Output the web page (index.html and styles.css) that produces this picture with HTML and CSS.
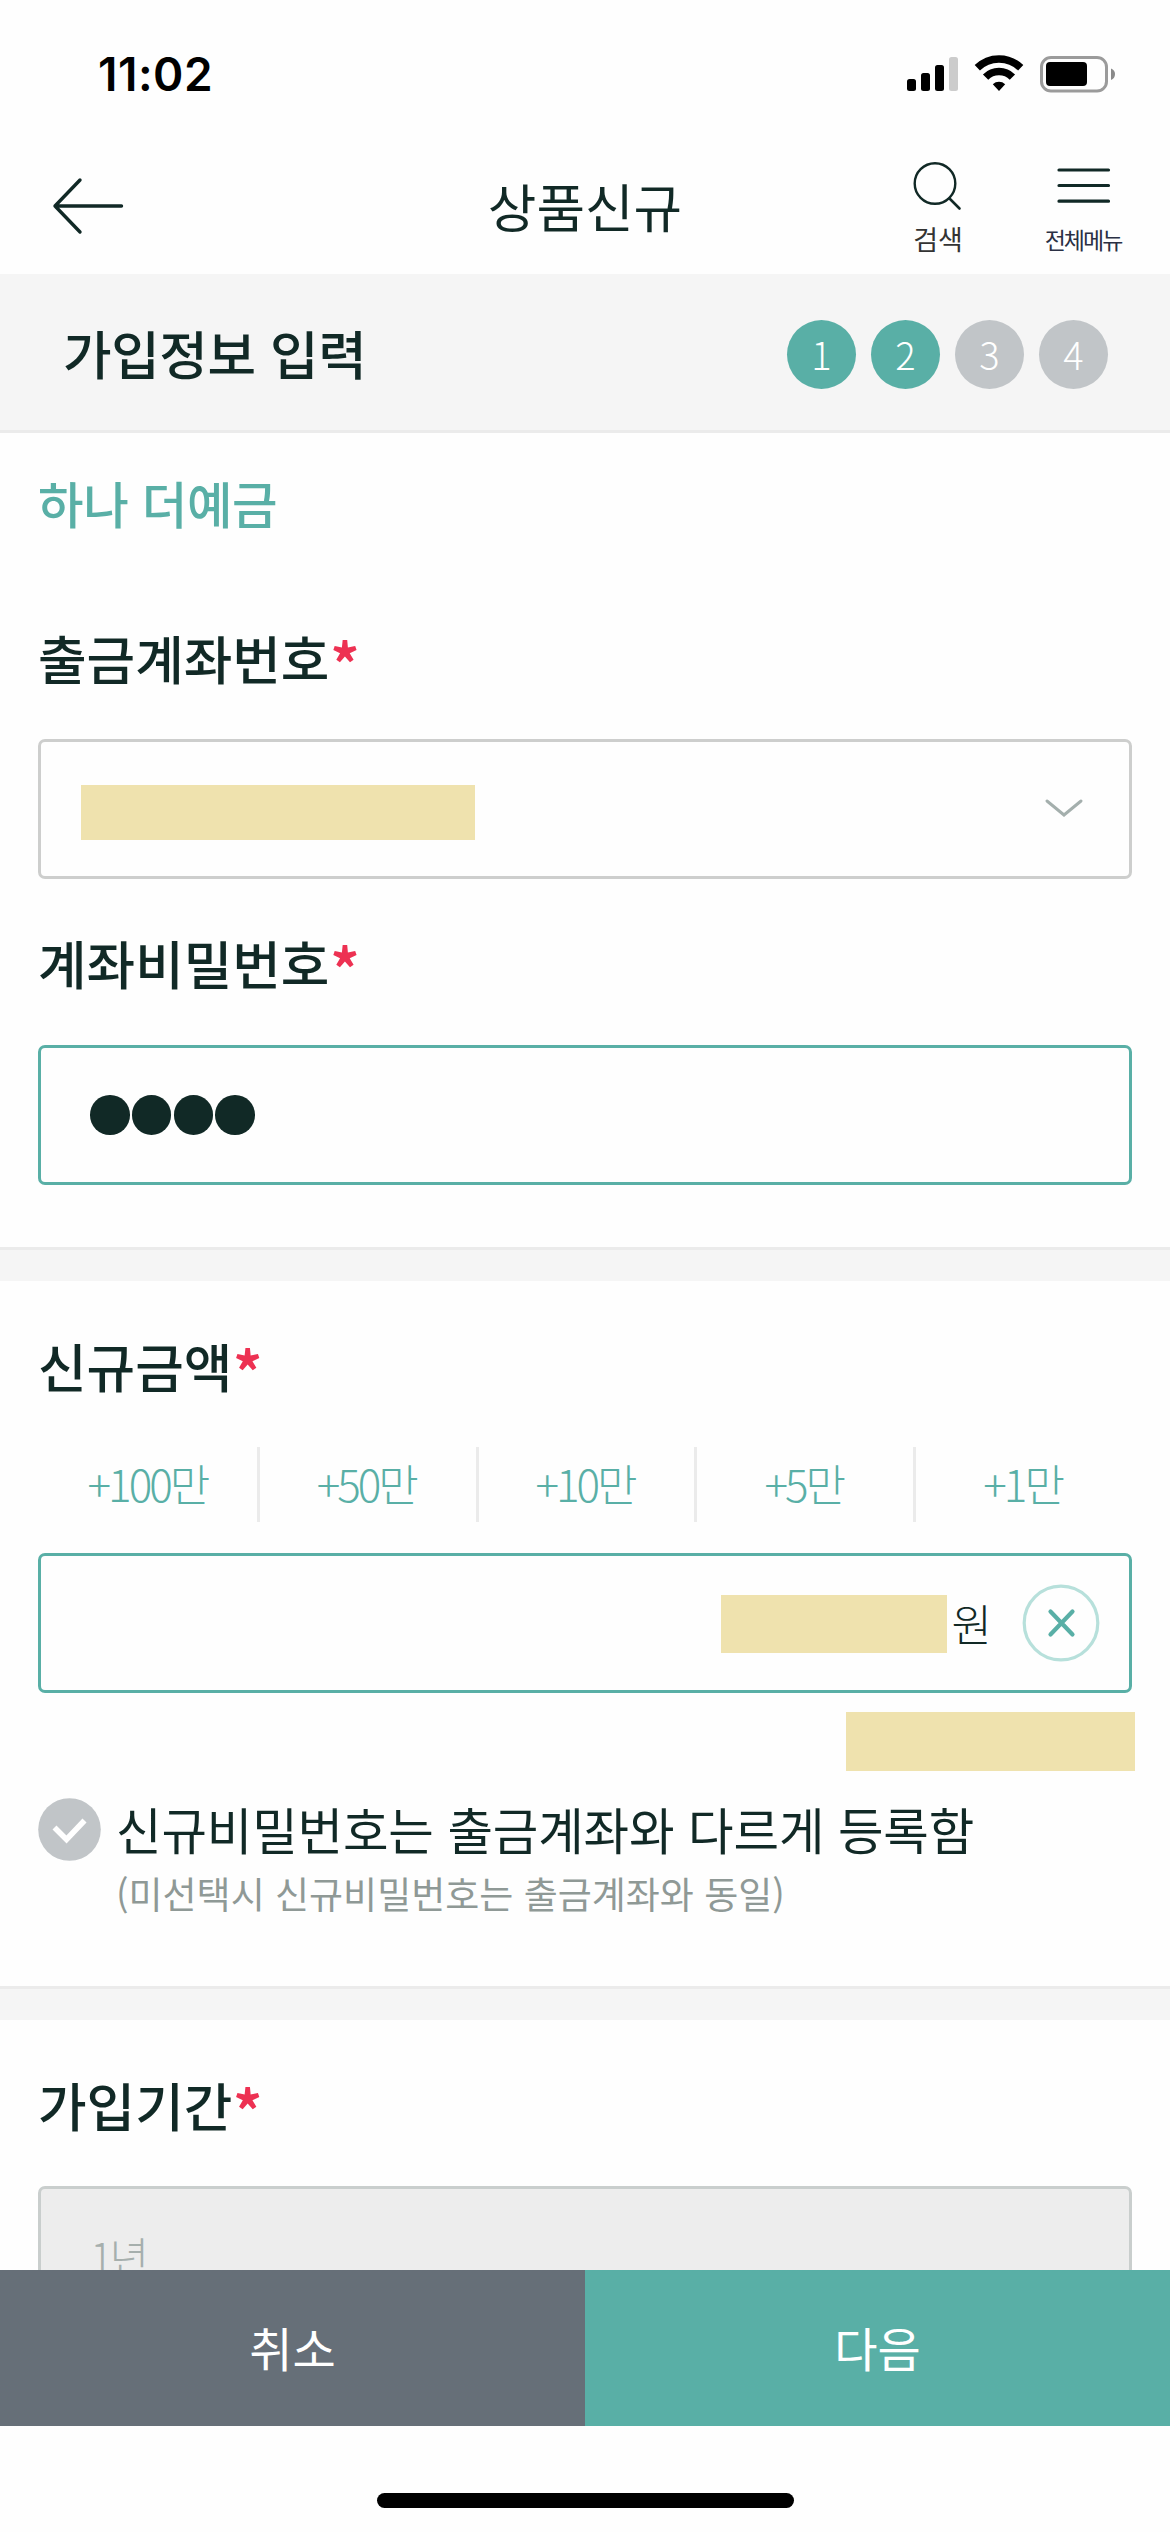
FILE: index.html
```html
<!DOCTYPE html>
<html lang="ko">
<head>
<meta charset="utf-8">
<title>상품신규</title>
<link rel="stylesheet" href="styles.css">
</head>
<body>
<div class="screen">
  <div class="status">
    <span class="time">11:02</span>
    <svg class="status-icons" width="210" height="40" viewBox="906 54 210 40">
      <rect x="907" y="79" width="9" height="12" rx="2.5"/>
      <rect x="921" y="73" width="9" height="18" rx="2.5"/>
      <rect x="935" y="65" width="9" height="26" rx="2.5"/>
      <rect x="949" y="57" width="9" height="34" rx="2.5" fill="#ccc"/>
      <g fill="none" stroke="#000">
        <path d="M977.300 67.800 A31 31 0 0 1 1020.700 67.800" stroke-width="7.500"/>
        <path d="M985.600 77.100 A19 19 0 0 1 1012.400 77.100" stroke-width="7.500"/>
      </g>
      <path d="M999 91 L992.800 84.200 A9.200 9.200 0 0 1 1005.200 84.200 Z"/>
      <rect x="1041.500" y="57.500" width="65" height="33.500" rx="9.500" fill="none" stroke="#9b9b9b" stroke-width="3"/>
      <rect x="1046" y="62" width="41" height="24" rx="4"/>
      <path d="M1111 68.500 Q1115 70 1115 74 Q1115 78.500 1111 80 Z" fill="#8a8a8a"/>
    </svg>
  </div>

  <header class="header">
    <svg class="back" width="76" height="60" viewBox="0 0 76 60">
      <path d="M29 4 L4 30 L29 56 M4 30 H70.500" fill="none" stroke="#112926" stroke-width="3.400" stroke-linecap="round" stroke-linejoin="round"/>
    </svg>
    <h1 class="title">상품신규</h1>
    <nav class="tools">
      <a class="tool">
        <svg width="60" height="56" viewBox="907 157 60 56">
          <circle cx="934" cy="183.500" r="20.300" fill="none" stroke="#112926" stroke-width="2.400"/>
          <path d="M948.500 198.500 L958.500 208.500" stroke="#112926" stroke-width="2.600" stroke-linecap="round"/>
        </svg>
        <span class="search-label">검색</span>
      </a>
      <a class="tool">
        <svg width="60" height="56" viewBox="1052 157 60 56">
          <path d="M1058 170 H1107.500 M1058 185.500 H1107.500 M1058 201.200 H1107.500" stroke="#112926" stroke-width="3.200" stroke-linecap="round"/>
        </svg>
        <span class="menu-label">전체메뉴</span>
      </a>
    </nav>
  </header>

  <section class="stepbar">
    <h2 class="step-title">가입정보 입력</h2>
    <ol class="steps">
      <li class="step on">1</li><li class="step on">2</li><li class="step">3</li><li class="step">4</li>
    </ol>
  </section>

  <main class="content">
    <section class="account">
      <p class="product">하나 더예금</p>
      <label class="label">출금계좌번호<em class="req">*</em></label>
      <div class="field select">
        <span class="mask mask-account"></span>
        <svg width="42" height="24" viewBox="0 0 42 24"><path d="M4 4 L21 18 L38 4" fill="none" stroke="#a4afad" stroke-width="3" stroke-linecap="round"/></svg>
      </div>
      <label class="label label-pw">계좌비밀번호<em class="req">*</em></label>
      <div class="field active pw"><i class="dot"></i><i class="dot"></i><i class="dot"></i><i class="dot"></i></div>
    </section>

    <section class="amount">
      <label class="label">신규금액<em class="req">*</em></label>
      <div class="quick">
        <span class="add">+100만</span><span class="add">+50만</span><span class="add">+10만</span><span class="add">+5만</span><span class="add">+1만</span>
      </div>
      <div class="field active money">
        <span class="mask mask-amount"></span>
        <span class="won">원</span>
        <svg class="clear" width="78" height="78" viewBox="0 0 78 78">
          <circle cx="39" cy="39" r="36.800" fill="none" stroke="#b7e0db" stroke-width="3.200"/>
          <path d="M28.500 27.500 L50.500 50.500 M50.500 27.500 L28.500 50.500" stroke="#59afa6" stroke-width="4.200" stroke-linecap="round"/>
        </svg>
      </div>
      <span class="mask mask-words"></span>
      <div class="check">
        <svg width="63" height="63" viewBox="0 0 63 63">
          <circle cx="31.500" cy="31.500" r="31.300" fill="#c1c5c8"/>
          <path d="M16.500 29.500 L28.500 41.500 L46.500 22.500" fill="none" stroke="#fff" stroke-width="5.600"/>
        </svg>
        <div class="check-text">
          <p class="check-main">신규비밀번호는 출금계좌와 다르게 등록함</p>
          <p class="check-sub">(미선택시 신규비밀번호는 출금계좌와 동일)</p>
        </div>
      </div>
    </section>

    <section class="period">
      <label class="label">가입기간<em class="req">*</em></label>
      <div class="field disabled">1년</div>
    </section>
  </main>

  <footer class="actions">
    <button class="btn cancel">취소</button>
    <button class="btn next">다음</button>
  </footer>
  <div class="home"><span class="indicator"></span></div>
</div>
</body>
</html>
```

FILE: styles.css
```css
* { box-sizing: border-box; margin: 0; padding: 0; }
body {
  background: #fefefe;
  color: #112926;
  font-family: "Noto Sans CJK KR", sans-serif;
  font-weight: 400;
}
.screen { display: flex; flex-direction: column; width: 1170px; height: 2532px; overflow: hidden; }

.status { display: flex; justify-content: space-between; height: 132px; padding: 54px 54px 0 98px; }
.time { font: 600 46px/40px Inter, sans-serif; color: #000; letter-spacing: 0.5px; }
.status-icons { display: block; }

.header { display: grid; grid-template-columns: 1fr auto 1fr; height: 142px; flex: none; }
.back { margin: 44px 0 0 51px; }
.title { font-size: 52.800px; font-weight: 400; line-height: 80px; padding-top: 33px; }
.tools { display: flex; justify-content: flex-end; gap: 57px; padding: 25px 43px 0 0; }
.tool { display: flex; flex-direction: column; align-items: center; width: 88px; white-space: nowrap; }
.search-label { font-size: 27px; line-height: 30px; margin-top: 11px; color: #333; }
.menu-label { font-size: 23px; line-height: 30px; margin-top: 11px; letter-spacing: -2px; color: #2a3044; }

.stepbar {
  display: flex; align-items: center; justify-content: space-between;
  height: 159px; flex: none; padding: 0 62px 0 63px;
  background: #f5f5f5; border-bottom: 3px solid #ebebeb;
}
.step-title { font-size: 52.800px; font-weight: 500; line-height: 80px; letter-spacing: -0.400px; }
.steps { display: flex; gap: 15px; list-style: none; padding-top: 4px; }
.step {
  width: 69px; height: 69px; border-radius: 50%;
  background: #c1c5c8; color: #fff;
  font-size: 38px; font-weight: 300; line-height: 68px; text-align: center;
}
.step.on { background: #59afa6; }

.content { flex: 1; min-height: 0; overflow: hidden; }
.account { height: 814px; padding: 30px 38px 0; }
.product { font-size: 49.500px; font-weight: 500; line-height: 80px; letter-spacing: -0.400px; color: #59afa6; }
.label { display: block; height: 80px; font-size: 52.800px; font-weight: 500; line-height: 80px; }
.req {
  font-style: normal; font-weight: 700; font-size: 57px; line-height: 1;
  vertical-align: -6px; color: #ed3152; margin-left: 1px;
}
.account .label { margin-top: 74px; }
.field {
  display: flex; align-items: center; height: 140px;
  border: 3px solid #cdcecd; border-radius: 7px; background: #fefefe;
}
.account .field { margin-top: 42px; }
.account .label.label-pw { margin-top: 43px; }
.account .field.pw { margin-top: 43px; }
.field.active { border-color: #59afa6; }
.select { justify-content: space-between; padding: 0 44px 0 40px; }
.mask { display: block; background: #efe2ae; }
.mask-account { width: 394px; height: 55px; margin-top: 7px; }
.pw { gap: 2.300px; padding-left: 49px; }
.dot { width: 39.500px; height: 39.500px; border-radius: 50%; background: #112926; }

.amount, .period { border-top: 3px solid #ebebeb; }
.amount::before, .period::before { content: ""; display: block; height: 31px; background: #f5f5f5; margin: 0 -38px; }
.amount { height: 739px; padding: 0 38px; }
.amount .label, .period .label { margin-top: 44px; }
.quick { display: grid; grid-template-columns: repeat(5, 1fr); margin-top: 42px; }
.add {
  height: 75px; padding-right: 3px; border-left: 3px solid #ebebeb; color: #59afa6;
  font-size: 44px; font-weight: 300; line-height: 73px; letter-spacing: -3px; text-align: center;
}
.add:first-child { border-color: transparent; }
.money { justify-content: flex-end; margin-top: 31px; padding-right: 29px; }
.mask-amount { width: 226px; height: 58px; margin-top: 2px; }
.won { font-size: 44px; font-weight: 300; line-height: 70px; letter-spacing: -2px; margin: 0 32px 0 5px; }
.mask-words { width: 289px; height: 59px; margin: 19px -3px 0 auto; }
.check { display: flex; gap: 15px; margin-top: 27px; }
.check-main { font-size: 49.500px; line-height: 64px; letter-spacing: -0.150px; margin-top: -1px; }
.check-sub { font-size: 37px; line-height: 64px; color: #8f9996; }

.period { padding: 0 38px; }
.disabled {
  margin-top: 42px; padding-left: 49px; padding-bottom: 2px;
  border-color: #c9cecd; background: #ededed;
  color: #a6afad; font-size: 43px; font-weight: 300; letter-spacing: -3.500px;
}

.actions { display: grid; grid-template-columns: 1fr 1fr; height: 156px; flex: none; }
.btn { border: 0; color: #fff; font: 400 47px/154px "Noto Sans CJK KR", sans-serif; padding-bottom: 2px; }
.cancel { background: #666f78; }
.next { background: #59afa6; }
.home { display: flex; justify-content: center; height: 106px; flex: none; padding-top: 67px; }
.indicator { width: 417px; height: 15px; border-radius: 8px; background: #000; }
```
